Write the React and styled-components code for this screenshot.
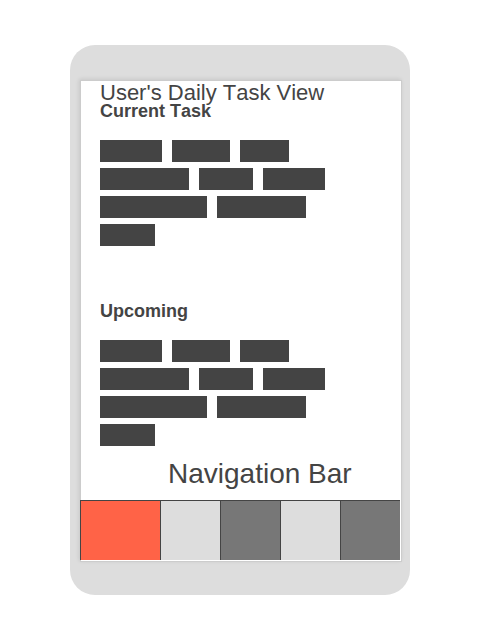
import React from "react";
import styled, { createGlobalStyle } from "styled-components";

const GlobalStyle = createGlobalStyle`
  body {
    margin: 0;
    background: #fff;
    color: #444;
    font-family: "Liberation Sans", Arial, sans-serif;
    font-kerning: none;
  }
`;

const Page = styled.main`
  padding: 45px 70px;
`;

const Phone = styled.div`
  padding: 35px 8px 33px 10px;
  border-radius: 25px;
  background: #ddd;
`;

const Screen = styled.div`
  padding-bottom: 1px;
  border: 1px solid #ccc;
  background: #fff;
  box-shadow: -1px -1px 4px rgba(0, 0, 0, 0.1);
`;

const Content = styled.div`
  padding: 0 19px;
`;

const Title = styled.h1`
  margin: 0;
  font-size: 22px;
  line-height: 24px;
  font-weight: 400;
`;

const Section = styled.section`
  & + & {
    margin-top: 59px;
  }
`;

const Heading = styled.h2`
  margin: 0 0 23px;
  font-size: 18px;
  line-height: 12px;
  font-weight: 700;
`;

const Lines = styled.div`
  display: grid;
  gap: 6px;
`;

const Line = styled.div`
  display: flex;
  gap: 10px;
`;

const Word = styled.span`
  width: ${({ $width }) => $width}px;
  height: 22px;
  background: #444;
`;

const NavTitle = styled.h2`
  margin: 11px 0 9px 87px;
  font-size: 28px;
  line-height: 34px;
  font-weight: 400;
`;

const NavBar = styled.nav`
  display: grid;
  grid-template-columns: 4fr 3fr 3fr 3fr 3fr;
  margin: 0 1px 0 -1px;
`;

const NavButton = styled.button`
  height: 60px;
  padding: 0;
  border: solid #444;
  border-width: 1px 0 0 1px;
  border-radius: 0;
  background: ${({ $color }) => $color};
  cursor: pointer;
`;

const taskLines = [
  [62, 58, 49],
  [89, 54, 62],
  [107, 89],
  [55],
];

const navItems = [
  { label: "Today", color: "tomato" },
  { label: "Tasks", color: "#ddd" },
  { label: "Calendar", color: "#777" },
  { label: "Profile", color: "#ddd" },
  { label: "Settings", color: "#777" },
];

function TaskSection({ title }) {
  return (
    <Section>
      <Heading>{title}</Heading>
      <Lines>
        {taskLines.map((line, row) => (
          <Line key={row}>
            {line.map((width, word) => (
              <Word key={word} $width={width} />
            ))}
          </Line>
        ))}
      </Lines>
    </Section>
  );
}

export default function App() {
  return (
    <>
      <GlobalStyle />
      <Page>
        <Phone>
          <Screen>
            <Content>
              <Title>User's Daily Task View</Title>
              <TaskSection title="Current Task" />
              <TaskSection title="Upcoming" />
            </Content>
            <NavTitle id="nav-title">Navigation Bar</NavTitle>
            <NavBar aria-labelledby="nav-title">
              {navItems.map(({ label, color }) => (
                <NavButton key={label} type="button" aria-label={label} $color={color} />
              ))}
            </NavBar>
          </Screen>
        </Phone>
      </Page>
    </>
  );
}
